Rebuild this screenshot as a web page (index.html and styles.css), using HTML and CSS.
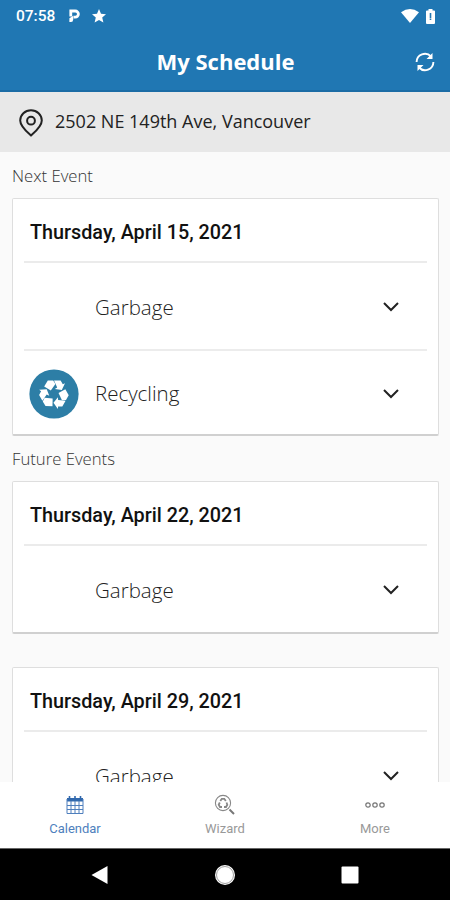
FILE: index.html
```html
<!DOCTYPE html>
<html lang="en">
<head>
    <meta charset="UTF-8">
    <title>My Schedule</title>
    <link rel="stylesheet" href="styles.css">
</head>
<body>
    <div class="statusbar">
        <span class="time">07:58</span>
        <svg class="parking" width="12" height="14" viewBox="0 0 12 14">
            <path d="M1.8 7.5V2H6.3A2.9 2.9 0 0 1 6.3 8.2H4.5" fill="none" stroke="#fff" stroke-width="2.8"/>
            <path d="M.4 13V9.2L4.2 6.8V10.5Q4.2 13 2 13Z" fill="#fff"/>
        </svg>
        <svg class="star" width="14" height="14" viewBox="0 0 14 14">
            <path d="M7 0L9 4.8L14 5.3L10.2 8.6L11.4 13.5L7 10.9L2.6 13.5L3.8 8.6L0 5.3L5 4.8Z" fill="#fff"/>
        </svg>
        <svg class="wifi" width="18" height="14" viewBox="0 0 18 14">
            <path d="M0 3.2Q9-3 18 3.2L9 14Z" fill="#fff"/>
        </svg>
        <svg class="battery" width="9" height="15" viewBox="0 0 9 15">
            <path d="M0 2.3Q0 1.5 1 1.5H2.5V0H6.5V1.5H8Q9 1.5 9 2.3V14Q9 15 8 15H1Q0 15 0 14Z" fill="#fff"/>
            <path d="M4.5 4V9M4.5 9.5V11" stroke="#2077b3" stroke-width="1.6"/>
        </svg>
    </div>
    <header>
        <h1>My Schedule</h1>
        <svg class="refresh" width="20" height="20" viewBox="0 0 20 20">
            <path d="M1.6 10A8.3 8.3 0 0 1 16 4.5M18.4 10A8.3 8.3 0 0 1 4 15.5" fill="none" stroke="#fff" stroke-width="1.9"/>
            <path d="M17.5 1V7H11.5ZM2.5 19V13H8.5Z" fill="#fff"/>
        </svg>
    </header>
    <div class="address">
        <svg width="24" height="28" viewBox="0 0 24 28">
            <path d="M12 26.5C8 23 1.2 17.5 1.2 11.5A10.8 10.3 0 0 1 22.8 11.5C22.8 17.5 16 23 12 26.5Z" fill="none" stroke="#222" stroke-width="2"/>
            <circle cx="12" cy="11.7" r="3.9" fill="none" stroke="#222" stroke-width="2"/>
        </svg>
        <span>2502 NE 149th Ave, Vancouver</span>
    </div>

    <main>
        <h2>Next Event</h2>
        <div class="card">
            <div class="date">Thursday, April 15, 2021</div>
            <div class="event">
                <span>Garbage</span>
                <svg class="arrow" width="16" height="10" viewBox="0 0 16 10"><path d="M1 1L8 8L15 1"/></svg>
            </div>
            <div class="event">
                <svg class="recycle" width="50" height="50" viewBox="-25 -25 50 50">
                    <defs>
                        <g id="arm">
                            <path d="M-9.8-7.4L-6.2-13.4H-.8L1.4-10L-3.2-3.4Z"/>
                            <path d="M0-13.4H6.6L8.8-9.8L11-10.8L7.8-3.9L.8-5L3.2-6.6Z"/>
                        </g>
                    </defs>
                    <circle r="24.6" fill="#2d7ea6"/>
                    <g fill="#fff">
                        <use href="#arm"/>
                        <use href="#arm" transform="rotate(120)"/>
                        <use href="#arm" transform="rotate(240)"/>
                    </g>
                </svg>
                <span>Recycling</span>
                <svg class="arrow" width="16" height="10" viewBox="0 0 16 10"><path d="M1 1L8 8L15 1"/></svg>
            </div>
        </div>

        <h2>Future Events</h2>
        <div class="card">
            <div class="date">Thursday, April 22, 2021</div>
            <div class="event">
                <span>Garbage</span>
                <svg class="arrow" width="16" height="10" viewBox="0 0 16 10"><path d="M1 1L8 8L15 1"/></svg>
            </div>
        </div>
        <div class="card later">
            <div class="date">Thursday, April 29, 2021</div>
            <div class="event">
                <span>Garbage</span>
                <svg class="arrow" width="16" height="10" viewBox="0 0 16 10"><path d="M1 1L8 8L15 1"/></svg>
            </div>
        </div>
    </main>

    <nav class="tabs">
        <div class="tab active">
            <svg width="22" height="22" viewBox="0 0 22 22">
                <path d="M3 4H19V7.5H3Z" fill="#3068ad"/>
                <path d="M5.5 2V5M11 2V5M16.5 2V5" stroke="#3068ad" stroke-width="1.6"/>
                <path d="M3 5V19.5H19V5M3 11.5H19M3 15.5H19M7 7V19.5M11 7V19.5M15 7V19.5" fill="none" stroke="#4e7fbd" stroke-width="1"/>
            </svg>
            <span>Calendar</span>
        </div>
        <div class="tab">
            <svg width="22" height="22" viewBox="0 0 22 22">
                <circle cx="9" cy="9" r="7.6" fill="none" stroke="#888" stroke-width="1.1"/>
                <g fill="none" stroke="#888" stroke-width="1.8">
                    <path d="M6.3 7L7.8 4.8H10.3L11.8 7M12.5 8.5L13.3 10.8L12 13H10M8 13H6L4.7 10.8L5.8 8.5"/>
                </g>
                <path d="M15.5 15.5L20 20" stroke="#777" stroke-width="2"/>
            </svg>
            <span>Wizard</span>
        </div>
        <div class="tab">
            <svg width="22" height="22" viewBox="0 0 22 22">
                <g fill="none" stroke="#777" stroke-width="1.2">
                    <circle cx="4" cy="11" r="2.2"/>
                    <circle cx="11" cy="11" r="2.2"/>
                    <circle cx="18" cy="11" r="2.2"/>
                </g>
            </svg>
            <span>More</span>
        </div>
    </nav>
    <div class="sysnav">
        <svg width="50" height="22" viewBox="0 0 50 22"><path d="M16.5 11L32.5 2V20Z" fill="#fff"/></svg>
        <svg width="22" height="22" viewBox="0 0 22 22">
            <circle cx="11" cy="11" r="10" fill="#fff"/>
            <circle cx="11" cy="11" r="8.5" fill="none" stroke="#888" stroke-width=".8"/>
        </svg>
        <svg width="50" height="22" viewBox="0 0 50 22"><rect x="16.5" y="2.5" width="17" height="17" rx="1" fill="#fff"/></svg>
    </div>
</body>
</html>
```

FILE: styles.css
```css
* {
    box-sizing: border-box;
}
body {
    margin: 0;
    height: 900px;
    display: flex;
    flex-direction: column;
    overflow: hidden;
    background: #fafafa;
    font-family: "Open Sans", sans-serif;
    color: #222;
}
svg {
    display: block;
    flex: none;
}
.statusbar {
    height: 32px;
    flex: none;
    padding: 0 15px 0 16px;
    display: flex;
    align-items: center;
    background: #2077b3;
    color: #fff;
}
.time {
    width: 53px;
    font: 500 15.5px Roboto, sans-serif;
}
.star {
    margin-left: 11px;
}
.wifi {
    margin-left: auto;
    margin-right: 7px;
}
header {
    height: 60px;
    flex: none;
    padding: 0 15px;
    display: grid;
    grid-template-columns: 20px 1fr 20px;
    align-items: center;
    background: #2077b3;
    border-bottom: 2px solid #1b6ca5;
    color: #fff;
}
h1 {
    grid-column: 2;
    margin: 0;
    padding-left: 1px;
    text-align: center;
    font-size: 22px;
    line-height: 30px;
    font-weight: 700;
}
.refresh {
    margin-top: 2px;
}
.address {
    height: 60px;
    flex: none;
    padding: 1px 19px 0;
    display: flex;
    align-items: center;
    gap: 12px;
    background: #e8e8e8;
    font-size: 18px;
}
.address span {
    padding-bottom: 4px;
}
main {
    flex: 1;
    min-height: 0;
    overflow: hidden;
    padding: 1px 11px 0 12px;
}
h2 {
    margin: 0;
    height: 45px;
    line-height: 45px;
    font-size: 16.7px;
    font-weight: 300;
    color: #333;
}
.card {
    padding: 0 11px;
    background: #fff;
    border: 1px solid #dedede;
    border-bottom: 2px solid #d0d0d0;
    border-radius: 2px;
}
.card.later {
    margin-top: 33px;
}
.date {
    height: 64px;
    padding-left: 6px;
    line-height: 68px;
    border-bottom: 2px solid #ebebeb;
    font-family: Roboto, sans-serif;
    font-weight: 500;
    font-size: 19.8px;
    color: #111;
}
.event {
    height: 86px;
    display: grid;
    grid-template-columns: 71px 1fr 16px;
    align-items: center;
    padding-right: 28px;
    padding-top: 2px;
    font-size: 20.5px;
    font-weight: 300;
}
.event + .event {
    height: 85px;
    border-top: 2px solid #ececec;
}
.event span {
    grid-column: 2;
    padding-bottom: 1px;
}
.recycle {
    margin-left: 5px;
}
.arrow {
    grid-column: 3;
    fill: none;
    stroke: #222;
    stroke-width: 2;
}
.tabs {
    height: 67px;
    flex: none;
    display: grid;
    grid-template-columns: repeat(3, 1fr);
    background: #fff;
    border-bottom: 1px solid #666;
}
.tab {
    display: flex;
    flex-direction: column;
    align-items: center;
    padding-top: 12px;
    font: 13px Roboto, sans-serif;
    color: #999;
}
.tab span {
    margin-top: 5px;
}
.tab.active {
    color: #4e80bd;
}
.sysnav {
    height: 51px;
    flex: none;
    display: flex;
    align-items: center;
    justify-content: space-between;
    padding: 0 75px;
    background: #000;
}
```
